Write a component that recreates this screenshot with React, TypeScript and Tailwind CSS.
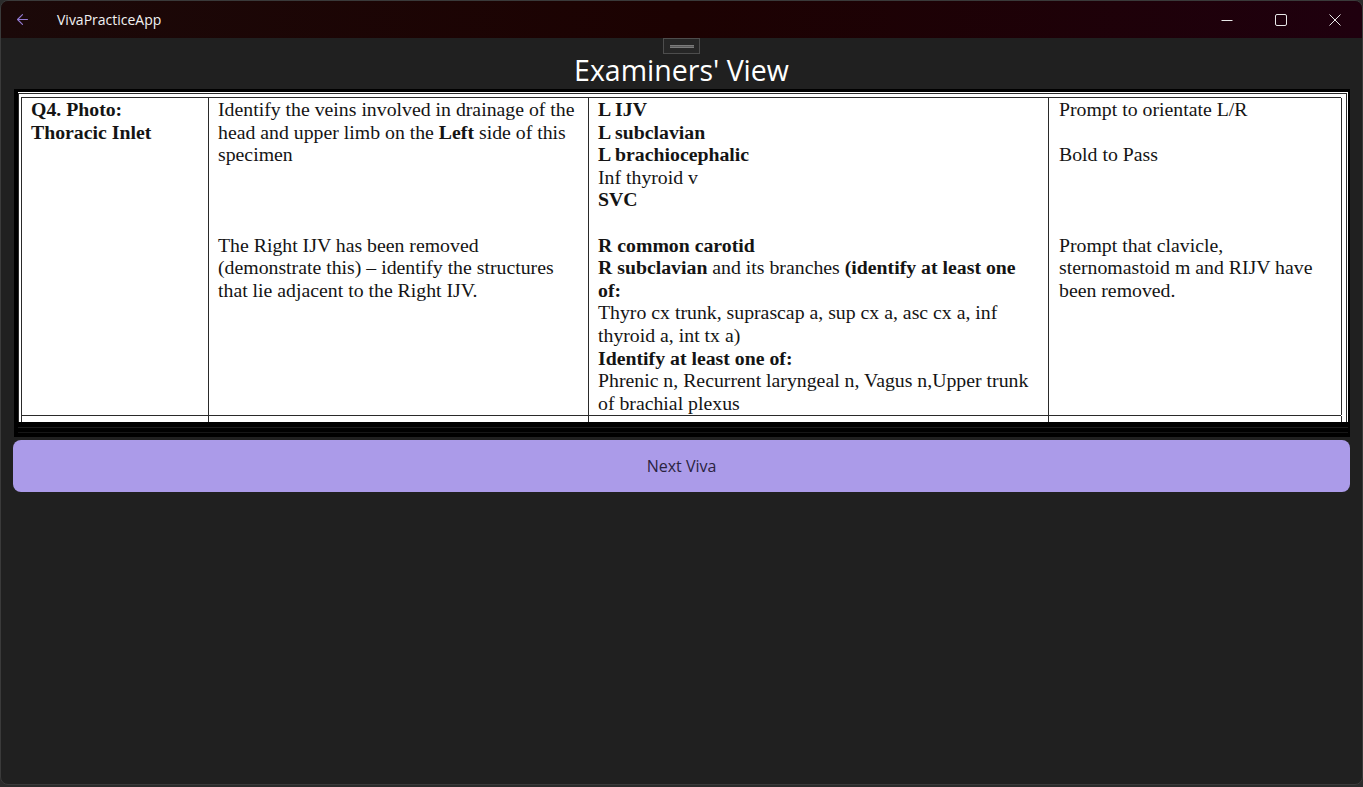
import React from "react";
import { ArrowLeft } from "lucide-react";

const serif = { fontFamily: '"Liberation Serif", "Times New Roman", serif' };

function TitleBar() {
  return (
    <div className="flex h-[37px] shrink-0 items-center bg-gradient-to-r from-[#1b0909] via-[#1c0202] to-[#1f000e] text-white">
      <div className="flex w-[42px] justify-center pl-[1px]">
        <ArrowLeft className="h-[17px] w-[17px] text-[#9379d1]" strokeWidth={1.6} />
      </div>
      <span className="ml-[14px] text-[14px] text-[#f2f2f2]" style={{ fontFamily: '"Open Sans", sans-serif' }}>
        VivaPracticeApp
      </span>
      <div className="ml-auto flex h-full items-center">
        {/* minimise */}
        <div className="flex h-full w-[54px] items-center justify-center">
          <svg width="12" height="12" viewBox="0 0 12 12">
            <path d="M0.5 6.5h11" stroke="#e8e8e8" strokeWidth="1" />
          </svg>
        </div>
        {/* maximise */}
        <div className="flex h-full w-[54px] items-center justify-center">
          <svg width="12" height="12" viewBox="0 0 12 12">
            <rect x="0.5" y="0.5" width="11" height="11" rx="1.5" fill="none" stroke="#e8e8e8" strokeWidth="1" />
          </svg>
        </div>
        {/* close */}
        <div className="flex h-full w-[54px] items-center justify-center">
          <svg width="12" height="12" viewBox="0 0 12 12">
            <path d="M0.5 0.5l11 11M11.5 0.5l-11 11" stroke="#e8e8e8" strokeWidth="1" />
          </svg>
        </div>
      </div>
    </div>
  );
}

function Line({ children }: { children?: React.ReactNode }) {
  return <div className="h-[22.6px] whitespace-nowrap">{children ?? "\u00a0"}</div>;
}

function SheetTable() {
  return (
    <div className="h-[330px] overflow-hidden bg-white text-[19.8px] leading-[22.6px] text-[#141414]" style={serif}>
      <div className="mt-px mr-px border border-b-0 border-[#2a2a2a] pt-[3px] pl-[2px] pr-[5px]">
        <div className="border-t border-l border-[#2a2a2a]">
          {/* row Q4 */}
          <div className="grid h-[318px] grid-cols-[187px_380px_460px_293px] border-b border-[#2a2a2a]">
            <div className="border-r border-[#2a2a2a] pl-[9px] font-bold">
              <Line>Q4. Photo:</Line>
              <Line>Thoracic Inlet</Line>
            </div>
            <div className="border-r border-[#2a2a2a] pl-[9px]">
              <Line>Identify the veins involved in drainage of the</Line>
              <Line>
                head and upper limb on the <b>Left</b> side of this
              </Line>
              <Line>specimen</Line>
              <Line />
              <Line />
              <Line />
              <Line>The Right IJV has been removed</Line>
              <Line>(demonstrate this) – identify the structures</Line>
              <Line>that lie adjacent to the Right IJV.</Line>
            </div>
            <div className="border-r border-[#2a2a2a] pl-[9px]">
              <Line>
                <b>L IJV</b>
              </Line>
              <Line>
                <b>L subclavian</b>
              </Line>
              <Line>
                <b>L brachiocephalic</b>
              </Line>
              <Line>Inf thyroid v</Line>
              <Line>
                <b>SVC</b>
              </Line>
              <Line />
              <Line>
                <b>R common carotid</b>
              </Line>
              <Line>
                <b>R subclavian</b> and its branches <b>(identify at least one</b>
              </Line>
              <Line>
                <b>of:</b>
              </Line>
              <Line>Thyro cx trunk, suprascap a, sup cx a, asc cx a, inf</Line>
              <Line>thyroid a, int tx a)</Line>
              <Line>
                <b>Identify at least one of:</b>
              </Line>
              <Line>Phrenic n, Recurrent laryngeal n, Vagus n,Upper trunk</Line>
              <Line>of brachial plexus</Line>
            </div>
            <div className="border-r border-[#2a2a2a] pl-[10px]">
              <Line>Prompt to orientate L/R</Line>
              <Line />
              <Line>Bold to Pass</Line>
              <Line />
              <Line />
              <Line />
              <Line>Prompt that clavicle,</Line>
              <Line>sternomastoid m and RIJV have</Line>
              <Line>been removed.</Line>
            </div>
          </div>
          {/* next row, cut off by the picture's edge */}
          <div className="grid h-[12px] grid-cols-[187px_380px_460px_293px]">
            <div className="border-r border-[#2a2a2a]" />
            <div className="border-r border-[#2a2a2a]" />
            <div className="border-r border-[#2a2a2a]" />
            <div className="border-r border-[#2a2a2a]" />
          </div>
        </div>
      </div>
    </div>
  );
}

export default function App() {
  return (
    <div className="h-[787px] w-[1363px] overflow-hidden bg-[#2b2b2b]">
      <div className="flex h-[785px] flex-col overflow-hidden rounded-[8px] border border-[#3a3a3a] bg-[#202020]">
        <TitleBar />
        <div className="flex flex-col pl-[12px] pr-[12px]" style={{ fontFamily: '"Open Sans", sans-serif' }}>
          {/* drag handle */}
          <div className="flex h-[16px] justify-center">
            <div className="flex h-[16px] w-[37px] items-center justify-center border border-[#4d4d4d] bg-[#262626]">
              <div className="h-[3px] w-[24px] border-y border-[#7a7a7a] bg-[#5a5a5a]" />
            </div>
          </div>
          <h1 className="flex h-[35px] items-start justify-center text-[28.5px] leading-[33px] text-white">
            Examiners' View
          </h1>
          {/* picture of the marking sheet */}
          <div className="ml-px bg-black pt-[3px] pl-[4px] pr-[2px]">
            <SheetTable />
            <div className="flex h-[15px] flex-col justify-center gap-[4px]">
              <div className="h-px bg-[#1c1c1c]" />
              <div className="h-px bg-[#161616]" />
            </div>
          </div>
          <button className="mt-[3px] h-[52px] w-full rounded-[8px] bg-[#ab9be9] text-[16px] text-[#2a2340]">
            Next Viva
          </button>
        </div>
      </div>
    </div>
  );
}
